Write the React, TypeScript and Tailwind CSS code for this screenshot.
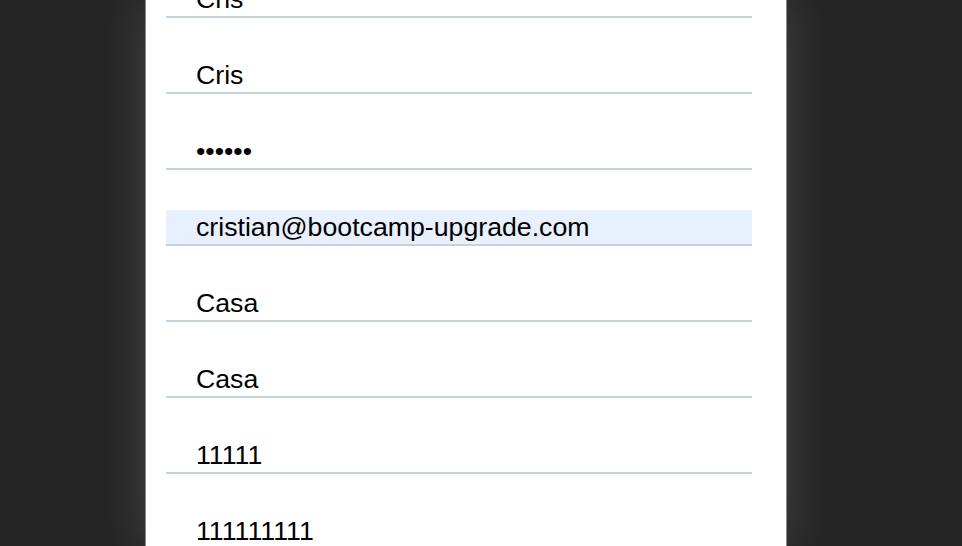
const fields = [
  { type: 'text', value: 'Cris' },
  { type: 'text', value: 'Cris' },
  { type: 'password', value: '123456' },
  { type: 'email', value: 'cristian@bootcamp-upgrade.com', filled: true },
  { type: 'text', value: 'Casa' },
  { type: 'text', value: 'Casa' },
  { type: 'text', value: '11111' },
  { type: 'text', value: '111111111' },
];

export default function App() {
  return (
    <div className="h-[546px] w-[962px] overflow-hidden bg-[#262626] font-['Liberation_Sans',Arial,sans-serif]">
      <div className="ml-[145px] flow-root h-full w-[642px] overflow-hidden border-x border-[#8a8a8a] bg-white pl-[20px] shadow-[0_0_45px_rgba(255,255,255,0.14)]">
        <form className="-mt-[18px] flex flex-col gap-[40px]">
          {fields.map((f, i) => (
            <input
              key={i}
              type={f.type}
              defaultValue={f.value}
              readOnly
              className={`h-[36px] w-[586px] border-b-2 border-[#c5d3da] pl-[30px] text-[26.7px] leading-[34px] text-black outline-none ${
                f.filled ? 'bg-[#e8f0fe]' : 'bg-white'
              }`}
            />
          ))}
        </form>
      </div>
    </div>
  );
}
